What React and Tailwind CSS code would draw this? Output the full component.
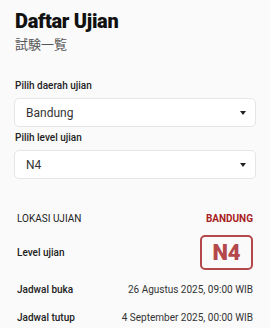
export default function App() {
  const font = { fontFamily: 'Roboto, "Noto Sans CJK JP", sans-serif' };
  return (
    <div className="w-[270px] h-[328px] bg-[#fafafa] overflow-hidden text-[#222]" style={font}>
      <div className="px-[15px] pt-[8px]">
        <h1 className="text-[20px] font-black leading-[26px] text-[#111] tracking-[-0.3px]">Daftar Ujian</h1>
        <div className="text-[13px] leading-[18px] text-[#555] mt-[1px]" style={{ fontFamily: '"Noto Sans CJK JP", sans-serif' }}>試験一覧</div>
      </div>
      <div className="px-[14px] mt-[26px]">
        <div className="text-[10px] font-medium leading-[13px] text-[#222] mb-[6px] pl-[1px]">Pilih daerah ujian</div>
        <div className="h-[29px] rounded-[5px] border border-[#e6e6e6] bg-white flex items-center justify-between pl-[11px] pr-[9px]">
          <span className="text-[12px] text-[#333]">Bandung</span>
          <span className="w-0 h-0 border-l-[3px] border-r-[3px] border-t-[4px] border-l-transparent border-r-transparent border-t-[#222]"></span>
        </div>
        <div className="text-[10px] font-medium leading-[13px] text-[#222] mt-[4px] mb-[6px] pl-[1px]">Pilih level ujian</div>
        <div className="h-[29px] rounded-[5px] border border-[#e6e6e6] bg-white flex items-center justify-between pl-[11px] pr-[9px]">
          <span className="text-[12px] text-[#333]">N4</span>
          <span className="w-0 h-0 border-l-[3px] border-r-[3px] border-t-[4px] border-l-transparent border-r-transparent border-t-[#222]"></span>
        </div>
      </div>
      <div className="px-[17px] mt-[32px] text-[10px]">
        <div className="flex items-center justify-between h-[14px]">
          <span className="text-[#222]">LOKASI UJIAN</span>
          <span className="font-bold text-[#a81e22]">BANDUNG</span>
        </div>
        <div className="flex items-center justify-between mt-[10px]">
          <span className="font-medium text-[#222]">Level ujian</span>
          <span className="w-[53px] h-[35px] rounded-[5px] border-[2px] border-[#b5484a] flex items-center justify-center text-[22px] font-black text-[#b5484a]">N4</span>
        </div>
        <div className="flex items-center justify-between mt-[12px] h-[14px]">
          <span className="font-medium text-[#222]">Jadwal buka</span>
          <span className="text-[#333]">26 Agustus 2025, 09:00 WIB</span>
        </div>
        <div className="flex items-center justify-between mt-[14px] h-[14px]">
          <span className="font-medium text-[#222]">Jadwal tutup</span>
          <span className="text-[#333]">4 September 2025, 00:00 WIB</span>
        </div>
      </div>
    </div>
  );
}
